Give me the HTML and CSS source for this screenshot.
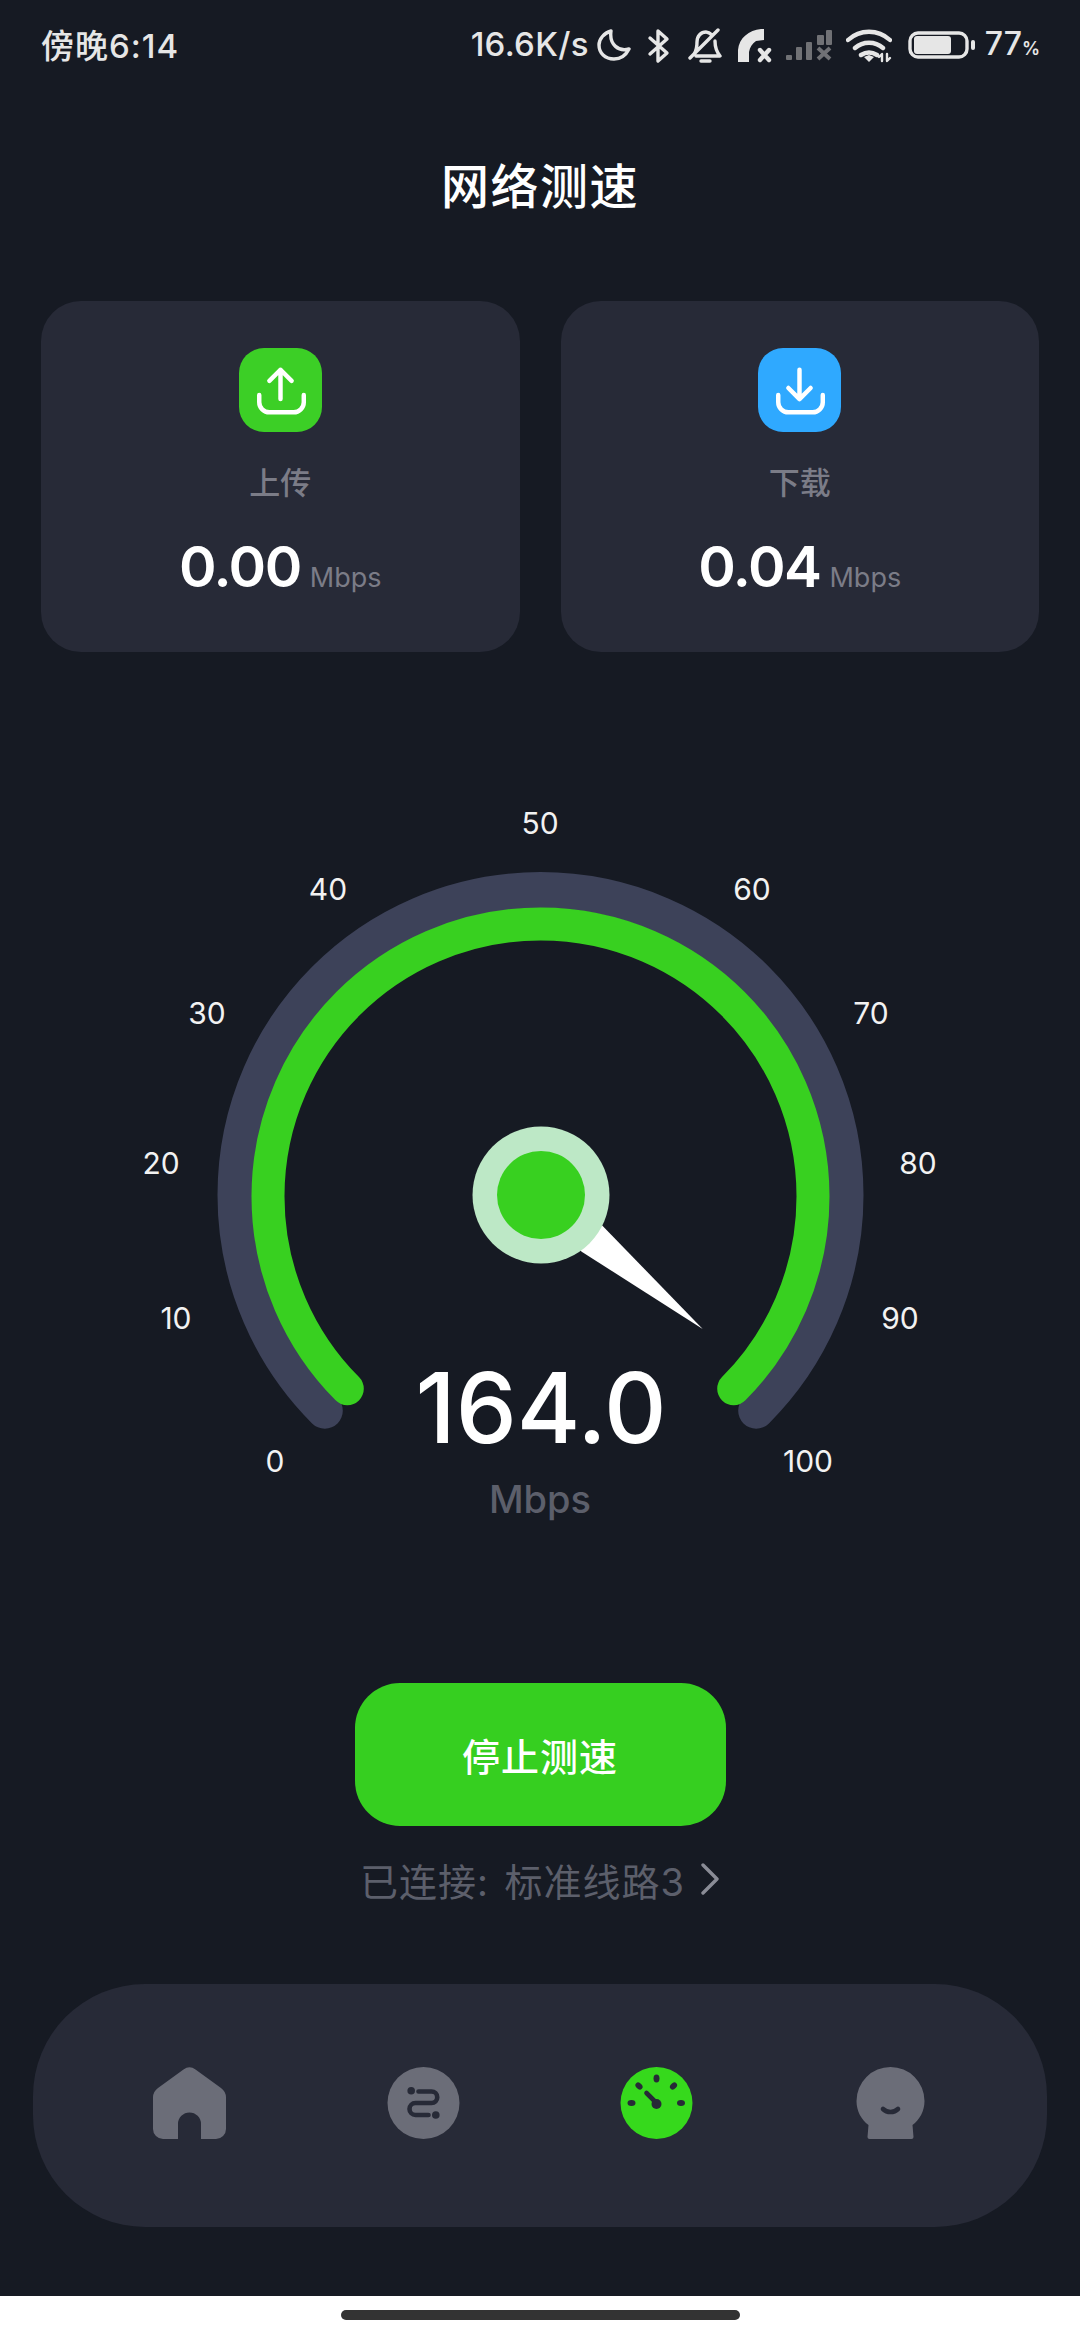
FILE: index.html
```html
<!DOCTYPE html>
<html lang="zh-CN">
<head>
    <meta charset="UTF-8">
    <meta name="viewport" content="width=device-width, initial-scale=1.0">
    <title>网络测速</title>
    <link rel="stylesheet" href="styles.css">
</head>
<body>
    <!-- status bar -->
    <div class="status">
        <span class="status_time">傍晚6:14</span>
        <div class="status_right">
            <span class="status_speed">16.6K/s</span>
            <svg class="si si_moon" viewBox="0 0 34 36"><path class="si_line" d="M14 3C7 5 2 11 2 17c0 8 6 14 15 14 7 0 12-4 15-10-10 3-20-4-18-18z"/></svg>
            <svg class="si si_bt" viewBox="0 0 24 36"><path class="si_line" d="M3 10l17 15-9 8V3l9 8L3 26"/></svg>
            <svg class="si si_bell" viewBox="0 0 35 36"><path class="si_line" d="M7 26c3-4 3-8 3-12 0-6 4-10 9-10 2 0 4 1 6 3M28 13c0 5 1 10 5 15H9M31 2L3 30M14 33h9"/></svg>
            <svg class="si si_phone" viewBox="0 0 35 36"><path class="si_fill" d="M1 34V22C2 10 12 2 24 1h3v11l-8 1c-4 3-6 6-7 11v10z"/><path class="si_line si_thick" d="M23 22l9 10M32 22l-9 10"/></svg>
            <svg class="si si_signal" viewBox="0 0 46 36"><g class="si_dim"><rect x="0" y="27" width="6" height="5" rx="1"/><rect x="10" y="19" width="6" height="13" rx="1"/><rect x="20" y="14" width="6" height="18" rx="1"/><rect x="31" y="7" width="7" height="10" rx="1"/><rect x="40" y="2" width="6" height="15" rx="1"/></g><path class="si_xdim" d="M32 20l12 11M44 20L32 31"/></svg>
            <svg class="si si_wifi" viewBox="0 0 46 36"><path class="si_line si_thick" d="M2 12c12-11 30-11 42 0M9 20c8-7 20-7 28 0M15 27c5-3 11-3 16 0"/><path class="si_fill" d="M18 29l5-2 5 2-5 5z"/><path class="si_line si_thin" d="M36 33v-7l-3 3M41 26v7l3-3"/></svg>
            <svg class="si si_batt" viewBox="0 0 67 36"><rect class="si_line" x="2" y="5" width="57" height="24" rx="8"/><rect class="si_fill" x="6" y="8" width="37" height="18" rx="3"/><rect class="si_fill" x="63" y="12" width="4" height="10" rx="2"/></svg>
            <span class="status_batt">77<small>%</small></span>
        </div>
    </div>

    <h1 class="title">网络测速</h1>

    <div class="cards">
        <div class="card">
            <div class="card_icon card_icon--green">
                <svg viewBox="0 0 82 82"><path d="M41 50V21M30 32l11-11 11 11M20 46v7a10 10 0 0 0 10 10h24a10 10 0 0 0 10-10v-7"/></svg>
            </div>
            <div class="card_label">上传</div>
            <div class="card_value"><b>0.00</b><span>Mbps</span></div>
        </div>
        <div class="card">
            <div class="card_icon card_icon--blue">
                <svg viewBox="0 0 82 82"><path d="M41 21v29M30 39l11 11 11-11M20 46v7a10 10 0 0 0 10 10h24a10 10 0 0 0 10-10v-7"/></svg>
            </div>
            <div class="card_label">下载</div>
            <div class="card_value"><b>0.04</b><span>Mbps</span></div>
        </div>
    </div>

    <!-- gauge, coordinates are page coordinates -->
    <svg class="gauge" viewBox="0 780 1080 780">
        <path class="gauge_track" d="M324.8 1410.7A305 305 0 1 1 756.2 1410.7"/>
        <path class="gauge_value" d="M347.3 1388.7A272.5 272.5 0 1 1 733.700 1388.7"/>
        <polygon class="gauge_needle" points="702.7,1329 602.7,1226 575,1198 555,1224 581.7,1251.7"/>
        <circle class="gauge_hub" cx="541" cy="1195" r="68.5"/>
        <circle class="gauge_dot" cx="541" cy="1195" r="44"/>
        <g class="gauge_ticks">
            <text x="275" y="1472">0</text>
            <text x="176" y="1328.5">10</text>
            <text x="161" y="1174">20</text>
            <text x="207" y="1024">30</text>
            <text x="328" y="899.5">40</text>
            <text x="540" y="834">50</text>
            <text x="752" y="899.5">60</text>
            <text x="871" y="1024">70</text>
            <text x="918" y="1174">80</text>
            <text x="900" y="1328.5">90</text>
            <text x="808" y="1472">100</text>
        </g>
        <text class="gauge_num" x="541" y="1443">164.0</text>
        <text class="gauge_unit" x="540" y="1513">Mbps</text>
    </svg>

    <button class="stop_btn">停止测速</button>

    <div class="line_row">
        <span>已连接: 标准线路3</span>
        <svg viewBox="0 0 20 32"><path d="M3 2l14 14L3 30"/></svg>
    </div>

    <nav class="tabs">
        <div class="tab">
            <svg viewBox="0 0 73 72"><path class="tab_fill" d="M30.5 2.5a10 10 0 0 1 12 0L68 21a12 12 0 0 1 5 10v31a10 10 0 0 1-10 10H48V57a11.500 11.500 0 0 0-23 0v15H10A10 10 0 0 1 0 62V31a12 12 0 0 1 5-10z"/></svg>
        </div>
        <div class="tab">
            <svg viewBox="-36 -36 72 72">
                <circle class="tab_fill" r="36"/>
                <path class="tab_cut" d="M-5-11.500H8a5.750 5.750 0 0 1 0 11.500H-8a6 6 0 0 0 0 12H5"/>
                <circle class="tab_dot" cx="-12.300" cy="-12.300" r="3.800"/>
                <circle class="tab_dot" cx="12.300" cy="12" r="3.800"/>
            </svg>
        </div>
        <div class="tab">
            <svg viewBox="-36 -36 72 72">
                <circle class="tab_fill tab_fill--on" r="36"/>
                <ellipse class="tab_dot" cx="0" cy="-24.500" rx="3" ry="4"/>
                <ellipse class="tab_dot" cx="-17.500" cy="-17" rx="3" ry="4" transform="rotate(-45 -17.500 -17)"/>
                <ellipse class="tab_dot" cx="17" cy="-17" rx="3" ry="4" transform="rotate(45 17 -17)"/>
                <ellipse class="tab_dot" cx="-25" cy="0" rx="4" ry="3"/>
                <ellipse class="tab_dot" cx="24.500" cy="0" rx="4" ry="3"/>
                <path class="tab_cut" d="M-10-10L0 0"/>
                <circle class="tab_dot" cx="0" cy="1" r="5"/>
            </svg>
        </div>
        <div class="tab">
            <svg viewBox="-36 -36 72 72">
                <path class="tab_fill" d="M-34-2a34 34 0 0 1 68 0c0 10-5 19-12 24l1 12a2 2 0 0 1-2 2h-42a2 2 0 0 1-2-2l1-12c-7-5-12-14-12-24z"/>
                <path class="tab_cut" d="M-7.500 6c4 4 11 4 15 0"/>
            </svg>
        </div>
    </nav>

    <div class="home_area"><div class="home_bar"></div></div>
</body>
</html>
```

FILE: styles.css
```css
*{
    box-sizing: border-box;
}

body{
    margin: 0;
    width: 1080px;
    height: 2340px;
    overflow: hidden;
    background: #161a23;
    color: #fff;
    font-family: "Inter", "Noto Sans CJK SC", sans-serif;
}

/* status bar */
.status{
    height: 92px;
    padding: 0 40px 0 41px;
    display: flex;
    align-items: center;
    justify-content: space-between;
    color: #e6e6e6;
}

.status_time{
    font-size: 33px;
    font-weight: 500;
    letter-spacing: 1px;
    margin-bottom: 5px;
}

.status_right{
    display: flex;
    align-items: center;
}

.status_speed{
    font-size: 33px;
    font-weight: 500;
    letter-spacing: 0.3px;
    margin-right: 8px;
    margin-bottom: 5px;
}

.status_batt{
    font-size: 32px;
    font-weight: 500;
    margin-left: 10px;
    margin-bottom: 5px;
}

.status_batt small{
    font-size: 18px;
    font-weight: 600;
}

.si{
    height: 36px;
    margin-right: 15px;
    flex: none;
}

.si_moon{ width: 34px; margin-right: 16px; }
.si_bt{ width: 24px; margin-right: 16px; }
.si_bell{ width: 35px; }
.si_phone{ width: 35px; margin-right: 14px; }
.si_signal{ width: 46px; margin-right: 14px; }
.si_wifi{ width: 46px; margin-right: 16px; }
.si_batt{ width: 67px; margin-right: 0; }

.si_line{
    fill: none;
    stroke: #e6e6e6;
    stroke-width: 3.4;
    stroke-linecap: round;
    stroke-linejoin: round;
}

.si_thick{ stroke-width: 4.4; }
.si_thin{ stroke-width: 2.4; }
.si_fill{ fill: #e6e6e6; }
.si_dim{ fill: #707175; }

.si_xdim{
    fill: none;
    stroke: #707175;
    stroke-width: 4;
}

.title{
    margin: 65px 0 0;
    height: 60px;
    line-height: 60px;
    text-align: center;
    font-size: 48px;
    font-weight: 500;
    letter-spacing: 1.5px;
}

/* top cards */
.cards{
    margin-top: 84px;
    padding: 0 41px;
    display: flex;
    gap: 41px;
}

.card{
    flex: 1;
    height: 351px;
    padding-top: 47px;
    background: #272a37;
    border-radius: 40px;
    display: flex;
    flex-direction: column;
    align-items: center;
}

.card_icon{
    width: 83px;
    height: 84px;
    border-radius: 25px;
}

.card_icon--green{ background: #3ccf26; }
.card_icon--blue{ background: #2fa9ff; }

.card_icon svg{
    display: block;
    width: 100%;
    height: 100%;
    fill: none;
    stroke: #fff;
    stroke-width: 4.4;
    stroke-linecap: round;
    stroke-linejoin: round;
}

.card_label{
    margin-top: 31px;
    height: 40px;
    line-height: 40px;
    font-size: 31px;
    font-weight: 500;
    color: #7b7c87;
}

.card_value{
    margin-top: 29px;
    display: flex;
    align-items: baseline;
    gap: 9px;
    line-height: 70px;
}

.card_value b{
    font-size: 57px;
    font-weight: 600;
    letter-spacing: -1.5px;
}

.card_value span{
    font-size: 27px;
    color: #7b7c87;
}

/* gauge */
.gauge{
    display: block;
    margin-top: 128px;
    width: 1080px;
    height: 780px;
}

.gauge_track,
.gauge_value{
    fill: none;
    stroke-linecap: round;
}

.gauge_track{
    stroke: #3d4259;
    stroke-width: 36px;
}

.gauge_value{
    stroke: #38d020;
    stroke-width: 33px;
}

.gauge_needle{ fill: #fff; }
.gauge_hub{ fill: #bde8c6; }
.gauge_dot{ fill: #38d020; }

.gauge_ticks text{
    fill: #f2f2f2;
    font-size: 30px;
    text-anchor: middle;
}

.gauge_num{
    fill: #fff;
    font-size: 97px;
    font-weight: 500;
    text-anchor: middle;
}

.gauge_unit{
    fill: #5c5f6b;
    font-size: 38px;
    font-weight: 500;
    text-anchor: middle;
}

.stop_btn{
    display: block;
    width: 371px;
    height: 143px;
    margin: 123px auto 0;
    padding: 0;
    border: none;
    border-radius: 45px;
    background: #36cf20;
    color: #fff;
    font-family: inherit;
    font-size: 38px;
    font-weight: 500;
    letter-spacing: 1px;
}

.line_row{
    margin-top: 31px;
    height: 44px;
    display: flex;
    align-items: center;
    justify-content: center;
    gap: 15px;
    font-size: 38px;
    letter-spacing: 1px;
    word-spacing: 4px;
    color: #5c5f6b;
}

.line_row svg{
    width: 20px;
    height: 32px;
    fill: none;
    stroke: #8a8c96;
    stroke-width: 3.4;
    stroke-linecap: round;
    stroke-linejoin: round;
}

/* bottom tabs */
.tabs{
    margin: 83px 33px 0;
    height: 243px;
    padding: 0 40px 5px;
    background: #272a37;
    border-radius: 112px;
    display: grid;
    grid-template-columns: repeat(4, 1fr);
    align-items: center;
    justify-items: center;
}

.tab svg{
    display: block;
    width: 73px;
    height: 72px;
}

.tab_fill{ fill: #6b6d78; }
.tab_fill--on{ fill: #36d91c; }
.tab_dot{ fill: #272a37; }

.tab_cut{
    fill: none;
    stroke: #272a37;
    stroke-width: 4.6;
    stroke-linecap: round;
}

.home_area{
    margin-top: 69px;
    height: 44px;
    padding-top: 14px;
    background: #fff;
}

.home_bar{
    width: 399px;
    height: 10px;
    margin: 0 auto;
    border-radius: 5px;
    background: #333;
}
```
